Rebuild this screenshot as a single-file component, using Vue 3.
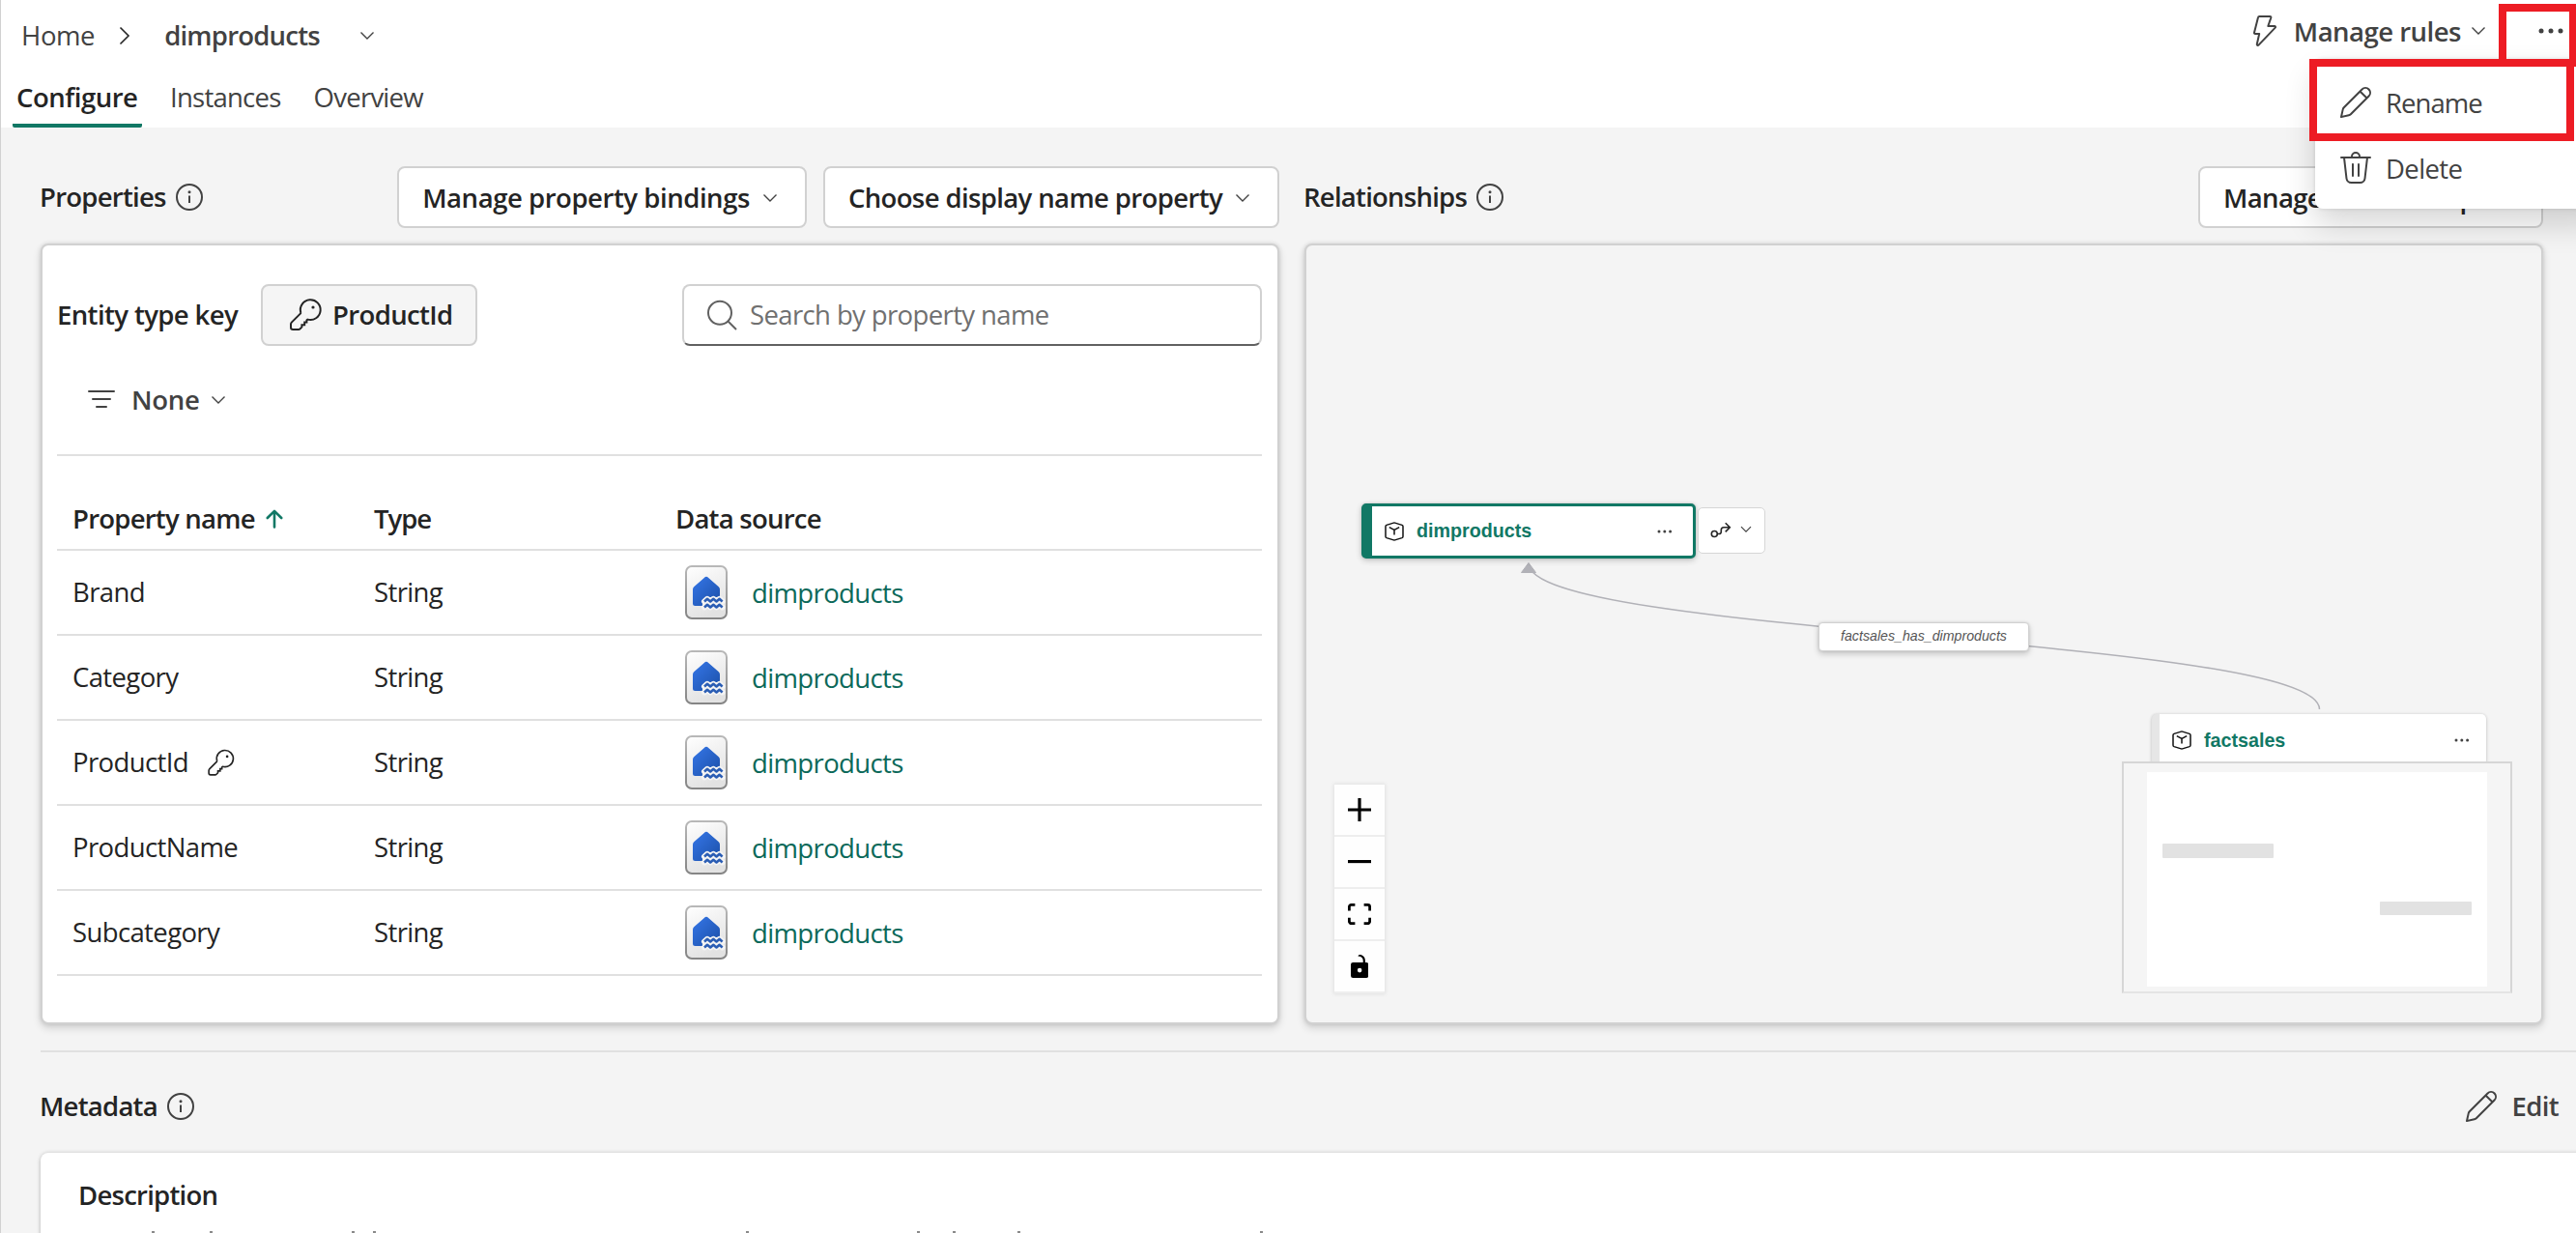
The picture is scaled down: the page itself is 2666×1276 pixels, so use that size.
<script setup>
import { ref } from 'vue';

const tabs = ['Configure', 'Instances', 'Overview'];
const activeTab = ref('Configure');

const properties = ref([
  { name: 'Brand', type: 'String', source: 'dimproducts', isKey: false },
  { name: 'Category', type: 'String', source: 'dimproducts', isKey: false },
  { name: 'ProductId', type: 'String', source: 'dimproducts', isKey: true },
  { name: 'ProductName', type: 'String', source: 'dimproducts', isKey: false },
  { name: 'Subcategory', type: 'String', source: 'dimproducts', isKey: false }
]);

const search = ref('');

const icons = {
  edit: 'M17.18 2.93a2.97 2.97 0 0 0-4.26-.06l-9.37 9.38c-.33.33-.56.74-.66 1.19l-.88 3.95a.5.5 0 0 0 .6.6l3.93-.87c.46-.1.9-.34 1.23-.68l9.36-9.36a2.97 2.97 0 0 0 .05-4.15Zm-3.55.65a1.97 1.97 0 1 1 2.8 2.8l-.68.66-2.8-2.79.68-.67Zm-1.38 1.38 2.8 2.8-7.99 7.97c-.2.2-.46.35-.74.41l-3.16.7.7-3.18c.07-.27.2-.51.4-.7l8-8Z',
  trash: 'M8.5 4h3a1.5 1.5 0 0 0-3 0Zm-1 0a2.5 2.5 0 0 1 5 0h5a.5.5 0 0 1 0 1h-1.05l-1.2 10.34A3 3 0 0 1 12.27 18H7.73a3 3 0 0 1-2.98-2.66L3.55 5H2.5a.5.5 0 0 1 0-1h5ZM5.74 15.23A2 2 0 0 0 7.73 17h4.54a2 2 0 0 0 1.99-1.77L15.44 5H4.56l1.18 10.23ZM8.5 7.5c.28 0 .5.22.5.5v6a.5.5 0 0 1-1 0V8c0-.28.22-.5.5-.5ZM12 8a.5.5 0 0 0-1 0v6a.5.5 0 0 0 1 0V8Z',
  key: 'M11.2 12.3l-.5.4v1H9.6v1.4H8.2v1.1l-.9.9c-.2.2-.5.4-.8.4H3.6c-.6 0-1.1-.5-1.1-1.1v-1.6c0-.4.2-.8.5-1.1l4.4-4.4c.2-.2.3-.4.2-.7A5.2 5.2 0 1 1 11.2 12.3Z'
};

const controls = [
  { id: 'zoom-in', box: '0 0 32 32', width: 24, d: 'M32 18.133H18.133V32h-4.266V18.133H0v-4.266h13.867V0h4.266v13.867H32z' },
  { id: 'zoom-out', box: '0 0 32 5', width: 24, d: 'M0 0h32v4.2H0z' },
  { id: 'fit', box: '0 0 32 30', width: 24, d: 'M3.692 4.63c0-.53.4-.938.939-.938h5.215V0H4.708C2.13 0 0 2.054 0 4.63v5.216h3.692V4.631zM27.354 0h-5.2v3.692h5.17c.53 0 .984.4.984.939v5.215H32V4.631A4.624 4.624 0 0027.354 0zm.954 24.83c0 .532-.4.94-.939.94h-5.215v3.768h5.215c2.577 0 4.631-2.13 4.631-4.707v-5.139h-3.692v5.139zm-23.677.94c-.531 0-.939-.4-.939-.94v-5.138H0v5.139c0 2.577 2.13 4.707 4.708 4.707h5.138V25.77H4.631z' },
  { id: 'lock', box: '0 0 25 32', width: 18.75, d: 'M21.333 10.667H19.81V7.619C19.81 3.429 16.38 0 12.19 0c-4.114 1.828-1.37 2.133.305 2.438 1.676.305 4.42 2.59 4.42 5.181v3.048H3.047A3.056 3.056 0 000 13.714v15.238A3.056 3.056 0 003.048 32h18.285a3.056 3.056 0 003.048-3.048V13.714a3.056 3.056 0 00-3.048-3.047zM12.19 24.533a3.056 3.056 0 01-3.047-3.047 3.056 3.056 0 013.047-3.048 3.056 3.056 0 013.048 3.048 3.056 3.056 0 01-3.048 3.047z' }
];

const nodes = [
  { name: 'dimproducts', selected: true, x: 57, y: 267 },
  { name: 'factsales', selected: false, x: 875, y: 485 }
];

// Tops of the first description line, the rest is below the fold
const descriptionMarks = [74, 134, 281, 303, 689, 866, 903, 970, 1221];
</script>

<template>
  <div class="page">
    <header class="header">
      <div class="title-row">
        <nav class="breadcrumb">
          <span class="crumb">Home</span>
          <svg class="crumb-sep" width="12" height="20" viewBox="0 0 12 20"><path d="M1.5 1.5 10 10l-8.5 8.5" /></svg>
          <span class="crumb current">dimproducts</span>
          <svg class="chevron crumb-chevron" width="16" height="10" viewBox="0 0 16 10"><path d="M1.5 1.5 8 8l6.5-6.5" /></svg>
        </nav>
        <div class="toolbar">
          <svg class="flash" width="24" height="32" viewBox="0 0 24 32">
            <path d="M6.3 1h11c.8 0 1.2.6 1 1.3L15.3 11H22c.9 0 1.3 1 .7 1.6L5.5 30.6c-.7.7-1.9.1-1.7-.9L6.200 19H2c-.7 0-1.200-.7-1-1.300L5 2c.1-.6.7-1 1.3-1Z" />
          </svg>
          <span class="toolbar-label">Manage rules</span>
          <svg class="chevron" width="16" height="10" viewBox="0 0 16 10"><path d="M1.5 1.5 8 8l6.5-6.5" /></svg>
          <svg class="more" width="26" height="6" viewBox="0 0 26 6">
            <circle cx="3" cy="3" r="2.5" /><circle cx="13" cy="3" r="2.5" /><circle cx="23" cy="3" r="2.5" />
          </svg>
        </div>
      </div>
      <div class="tabs">
        <button
          v-for="tab in tabs"
          :key="tab"
          class="tab"
          :class="{ active: tab === activeTab }"
          @click="activeTab = tab"
        >{{ tab }}</button>
      </div>
    </header>

    <main class="content">
      <div class="columns">
        <section class="column">
          <div class="section-head">
            <h2 class="section-title">Properties</h2>
            <svg class="info" width="28" height="28" viewBox="0 0 28 28">
              <circle cx="14" cy="14" r="13" /><path d="M14 12.5V20" /><circle class="dot" cx="14" cy="8.8" r="1.5" />
            </svg>
            <div class="section-actions">
              <button class="btn wide">
                Manage property bindings
                <svg class="chevron" width="16" height="10" viewBox="0 0 16 10"><path d="M1.5 1.5 8 8l6.5-6.5" /></svg>
              </button>
              <button class="btn">
                Choose display name property
                <svg class="chevron" width="16" height="10" viewBox="0 0 16 10"><path d="M1.5 1.5 8 8l6.5-6.5" /></svg>
              </button>
            </div>
          </div>

          <div class="panel properties-panel">
            <div class="key-row">
              <span class="key-label">Entity type key</span>
              <button class="btn key-btn">
                <svg class="key-icon" width="40" height="40" viewBox="0 0 20 20"><path :d="icons.key" /><circle cx="14" cy="6" r=".8" /></svg>
                ProductId
              </button>
              <label class="search">
                <svg width="32" height="32" viewBox="0 0 32 32"><circle cx="14" cy="13.8" r="12" /><path d="M22.5 22.5 31 31" /></svg>
                <input v-model="search" type="text" placeholder="Search by property name" />
              </label>
            </div>

            <div class="filter-row">
              <svg width="28" height="20" viewBox="0 0 28 20"><path d="M1 1h26M5 9h18M9 17h10" /></svg>
              <span class="filter-label">None</span>
              <svg class="chevron" width="16" height="10" viewBox="0 0 16 10"><path d="M1.5 1.5 8 8l6.5-6.5" /></svg>
            </div>

            <div class="table">
              <div class="row head">
                <div class="cell">
                  Property name
                  <svg class="sort" width="18" height="20" viewBox="0 0 18 20"><path d="M9 18.5V2M1.8 9 9 1.8 16.2 9" /></svg>
                </div>
                <div class="cell tight">Type</div>
                <div class="cell">Data source</div>
              </div>
              <div v-for="item in properties" :key="item.name" class="row">
                <div class="cell">
                  {{ item.name }}
                  <svg v-if="item.isKey" class="key-icon row-key" width="33" height="33" viewBox="0 0 20 20"><path :d="icons.key" /><circle cx="14" cy="6" r=".8" /></svg>
                </div>
                <div class="cell">{{ item.type }}</div>
                <div class="cell source">
                  <svg width="44" height="56" viewBox="0 0 44 56">
                    <defs>
                      <linearGradient id="tile-fill" x1="0" y1="0" x2=".4" y2="1">
                        <stop offset="0" stop-color="#fff" /><stop offset="1" stop-color="#e2e2e2" />
                      </linearGradient>
                      <linearGradient id="tile-edge" x1="0" y1="0" x2="0" y2="1">
                        <stop offset="0" stop-color="#b8b8b8" /><stop offset="1" stop-color="#858585" />
                      </linearGradient>
                      <linearGradient id="house-fill" x1="0" y1="0" x2="1" y2="1">
                        <stop offset="0" stop-color="#3576e8" /><stop offset="1" stop-color="#1c50a8" />
                      </linearGradient>
                    </defs>
                    <rect x="1" y="1" width="42" height="54" rx="6" fill="url(#tile-fill)" stroke="url(#tile-edge)" stroke-width="2" />
                    <path d="M19.8 12.9a3.2 3.2 0 0 1 4.4 0L34.8 22.3a3.6 3.6 0 0 1 1.2 2.7V39H18v3h-7.5A2.5 2.5 0 0 1 8 39.5V25c0-1 .4-2 1.2-2.7Z" fill="url(#house-fill)" />
                    <path class="halo" d="M20 37.4 23 34.800l3.200 2.600 3.100-2.600 3.200 2.600 3.100-2.600 3 2.600M20 43.400l3-2.600 3.200 2.600 3.100-2.600 3.200 2.600 3.100-2.600 3 2.600" />
                    <path class="wave" d="M20 37.4 23 34.800l3.200 2.600 3.100-2.600 3.200 2.600 3.100-2.600 3 2.600M20 43.400l3-2.600 3.200 2.600 3.100-2.600 3.200 2.600 3.100-2.600 3 2.600" />
                  </svg>
                  <a class="link">{{ item.source }}</a>
                </div>
              </div>
            </div>
          </div>
        </section>

        <section class="column">
          <div class="section-head">
            <h2 class="section-title">Relationships</h2>
            <svg class="info" width="28" height="28" viewBox="0 0 28 28">
              <circle cx="14" cy="14" r="13" /><path d="M14 12.5V20" /><circle class="dot" cx="14" cy="8.8" r="1.5" />
            </svg>
            <div class="section-actions">
              <button class="btn relations-btn">
                Manage relationships
                <svg class="chevron" width="16" height="10" viewBox="0 0 16 10"><path d="M1.5 1.5 8 8l6.5-6.5" /></svg>
              </button>
            </div>
          </div>

          <div class="panel canvas">
            <svg class="edges" width="1278" height="804" viewBox="0 0 1278 804">
              <path class="edge" d="M230 329C230 404.5 1048.5 404.5 1048.5 480" />
              <path class="edge-arrow" d="M230 328.5 222.5 338.5h15Z" />
            </svg>

            <div
              v-for="node in nodes"
              :key="node.name"
              class="node"
              :class="{ selected: node.selected }"
              :style="{ left: node.x + 'px', top: node.y + 'px' }"
            >
              <svg class="cube" width="20" height="20" viewBox="0 0 20 20">
                <path d="M9.3 1.1q.7-.2 1.4 0L18 3.4q1 .4 1 1.400v10.400q0 1-1 1.400l-7.300 2.300q-.7.2-1.400 0L2 16.600q-1-.4-1-1.400V4.800q0-1 1-1.400ZM4.800 5.600 10 8.300l5.200-2.700M10 8.300v5.200" />
              </svg>
              <span class="node-name">{{ node.name }}</span>
              <svg class="node-more" width="16" height="4" viewBox="0 0 16 4">
                <circle cx="2" cy="2" r="1.5" /><circle cx="7.8" cy="2" r="1.5" /><circle cx="13.6" cy="2" r="1.5" />
              </svg>
            </div>

            <div class="node-tools">
              <svg width="22" height="17" viewBox="0 0 22 17"><circle cx="4.3" cy="12.5" r="3" /><path d="M7.3 12.5H9q2.3 0 2.3-2.3V8.500q0-2.700 2.700-2.700h6M15.700 1.200l4.600 4.600-4.600 4.600" /></svg>
              <svg class="chevron" width="12" height="8" viewBox="0 0 12 8"><path d="M1 1.2 6 6.2l5-5" /></svg>
            </div>

            <div class="edge-label">factsales_has_dimproducts</div>

            <div class="minimap">
              <svg width="400" height="236" viewBox="0 0 400 236">
                <rect x="24" y="9" width="352" height="222" fill="#fff" />
                <rect x="40" y="83" width="115" height="15" rx="1" fill="#e2e2e2" />
                <rect x="265" y="143" width="95" height="14" rx="1" fill="#e2e2e2" />
              </svg>
            </div>

            <div class="controls">
              <button v-for="control in controls" :key="control.id" class="control">
                <svg :width="control.width" :viewBox="control.box"><path :d="control.d" /></svg>
              </button>
            </div>
          </div>
        </section>
      </div>

      <div class="metadata-head">
        <h2 class="section-title">Metadata</h2>
        <svg class="info" width="28" height="28" viewBox="0 0 28 28">
          <circle cx="14" cy="14" r="13" /><path d="M14 12.5V20" /><circle class="dot" cx="14" cy="8.8" r="1.5" />
        </svg>
        <button class="edit-btn">
          <svg width="40" height="40" viewBox="0 0 20 20"><path :d="icons.edit" /></svg>
          Edit
        </button>
      </div>
      <div class="card">
        <h3 class="section-title">Description</h3>
        <svg class="description" width="1300" height="4" viewBox="0 0 1300 4">
          <rect v-for="x in descriptionMarks" :key="x" :x="x" y="0" width="3" height="4" />
        </svg>
      </div>
    </main>

    <div class="menu">
      <div class="menu-item rename">
        <svg width="40" height="40" viewBox="0 0 20 20"><path :d="icons.edit" /></svg>
        <span>Rename</span>
      </div>
      <div class="menu-item">
        <svg width="40" height="40" viewBox="0 0 20 20"><path :d="icons.trash" /></svg>
        <span>Delete</span>
      </div>
    </div>
    <div class="highlight highlight-more"></div>
    <div class="highlight highlight-rename"></div>
  </div>
</template>

<style>
body {
  margin: 0;
  overflow: hidden;
}
</style>

<style scoped>
.page {
  position: relative;
  box-sizing: border-box;
  width: 2666px;
  height: 1276px;
  overflow: hidden;
  border-left: 1px solid #d1d1d1;
  background: #f4f4f4;
  color: #242424;
  font-family: "Segoe UI", "Open Sans", sans-serif;
  font-size: 27.5px;
  line-height: 40px;
  letter-spacing: -0.62px;
}
.page * {
  box-sizing: border-box;
}
button {
  font: inherit;
  letter-spacing: inherit;
  color: inherit;
  margin: 0;
}
svg {
  display: block;
  flex: none;
}
.chevron {
  fill: none;
  stroke: #424242;
  stroke-width: 1.4;
}

/* Header */
.header {
  height: 132px;
  background: #fff;
  color: #424242;
}
.title-row {
  display: flex;
  justify-content: space-between;
  align-items: flex-start;
  height: 73px;
}
.breadcrumb {
  display: flex;
  align-items: center;
  height: 73px;
  padding-left: 21px;
}
.crumb {
  letter-spacing: -0.4px;
}
.crumb-sep {
  margin: 0 35px 0 25px;
  fill: none;
  stroke: #242424;
  stroke-width: 1.6;
}
.current {
  font-weight: 600;
  letter-spacing: -0.78px;
}
.crumb-chevron {
  margin-left: 41px;
}
.toolbar {
  display: flex;
  align-items: center;
  height: 64px;
  padding-right: 13px;
}
.flash {
  fill: none;
  stroke: #424242;
  stroke-width: 2;
  stroke-linejoin: round;
}
.toolbar-label {
  margin: 0 10px 0 18px;
  padding-top: 2px;
  font-weight: 600;
  letter-spacing: -0.5px;
}
.more {
  margin-left: 54px;
  fill: #424242;
}
.tabs {
  display: flex;
  gap: 24px;
  height: 59px;
  padding-left: 12px;
}
.tab {
  padding: 0 5px 4px;
  border: none;
  background: none;
  letter-spacing: -0.75px;
}
.tab.active {
  width: 134px;
  padding: 0 0 0 4px;
  border-bottom: 4px solid #117865;
  border-radius: 2px;
  color: #242424;
  font-weight: 600;
  letter-spacing: -0.48px;
  text-align: left;
}

/* Sections */
.content {
  padding: 40px 0 0 41px;
}
.columns {
  display: grid;
  grid-template-columns: 1282px 1282px;
  gap: 26px;
}
.column {
  display: flex;
  flex-direction: column;
  gap: 16px;
}
.section-head {
  display: flex;
  align-items: center;
  height: 64px;
}
.section-title {
  margin: 0 0 0 -1px;
  font-size: inherit;
  font-weight: 600;
  letter-spacing: -0.75px;
}
.info {
  margin-left: 10px;
  fill: none;
  stroke: #424242;
  stroke-width: 2;
}
.info .dot {
  fill: #424242;
  stroke: none;
}
.section-actions {
  display: flex;
  gap: 17px;
  margin-left: auto;
}
.btn {
  display: flex;
  align-items: center;
  gap: 13px;
  height: 64px;
  padding: 1px 28px 0 24px;
  border: 2px solid #d1d1d1;
  border-radius: 8px;
  background: #fff;
  font-weight: 600;
  white-space: nowrap;
}
.wide {
  letter-spacing: -0.45px;
}
.relations-btn {
  width: 357px;
}
.panel {
  height: 808px;
  border: 2px solid #d1d1d1;
  border-radius: 8px;
  box-shadow: 0 0 4px rgba(0, 0, 0, 0.12), 0 4px 8px rgba(0, 0, 0, 0.14);
}

/* Properties */
.properties-panel {
  padding: 40px 16px 0 15px;
  background: #fff;
}
.key-row {
  display: flex;
  align-items: center;
}
.key-label {
  width: 211px;
  font-weight: 600;
  letter-spacing: -0.6px;
}
.key-btn {
  gap: 8px;
  width: 224px;
  padding: 0 0 0 24px;
  background: #f5f5f5;
}
.key-icon {
  fill: none;
  stroke: #242424;
  stroke-width: 1;
}
.key-icon circle {
  fill: #242424;
  stroke: none;
}
.search {
  display: flex;
  align-items: center;
  gap: 13px;
  width: 600px;
  height: 64px;
  margin-left: auto;
  padding: 0 23px;
  border: 2px solid #d1d1d1;
  border-bottom-color: #616161;
  border-radius: 8px;
}
.search svg {
  fill: none;
  stroke: #616161;
  stroke-width: 2;
}
.search input {
  flex: 1;
  min-width: 0;
  padding: 0;
  border: none;
  outline: none;
  background: none;
  color: #242424;
  font: inherit;
  letter-spacing: inherit;
}
.search input::placeholder {
  color: #707070;
  opacity: 1;
}
.filter-row {
  display: flex;
  align-items: center;
  height: 114px;
  padding-left: 32px;
  border-bottom: 2px solid #e0e0e0;
  color: #424242;
  font-weight: 600;
}
.filter-row svg:first-child {
  fill: none;
  stroke: #424242;
  stroke-width: 2;
  stroke-linecap: round;
}
.filter-label {
  margin: 0 12px 0 17px;
  letter-spacing: -0.3px;
}
.row {
  display: grid;
  grid-template-columns: 312px 312px 1fr;
  height: 88px;
  border-bottom: 2px solid #e0e0e0;
}
.row.head {
  height: 98px;
  padding-top: 34px;
  font-weight: 600;
  letter-spacing: -0.76px;
}
.cell {
  display: flex;
  align-items: center;
  padding-left: 16px;
}
.tight {
  letter-spacing: -1px;
}
.sort {
  margin-left: 11px;
  fill: none;
  stroke: #117865;
  stroke-width: 2.6;
  stroke-linecap: round;
  stroke-linejoin: round;
}
.row-key {
  margin-left: 17px;
}
.source {
  gap: 25px;
  padding-left: 26px;
}
.halo,
.wave {
  fill: none;
  stroke: #f4f4f4;
  stroke-width: 6;
  stroke-linecap: round;
  stroke-linejoin: round;
}
.wave {
  stroke: #2a5db4;
  stroke-width: 2.6;
  stroke-linecap: butt;
}
.link {
  padding-top: 2px;
  color: #0c695a;
}

/* Relationship canvas */
.canvas {
  position: relative;
  background: #f4f4f4;
}
.edges {
  position: absolute;
  left: 0;
  top: 0;
}
.edge {
  fill: none;
  stroke: #b1b1b7;
  stroke-width: 1.5;
}
.edge-arrow {
  fill: #b1b1b7;
  stroke: #b1b1b7;
  stroke-linejoin: round;
}
.node {
  position: absolute;
  display: flex;
  align-items: center;
  width: 346px;
  height: 53px;
  padding: 0 17px 0 13px;
  border-left: 8px solid #e6e6e6;
  border-radius: 5px;
  background: #fff;
  box-shadow: 0 0 3px rgba(0, 0, 0, 0.14), 0 2px 4px rgba(0, 0, 0, 0.12);
}
.node.selected {
  height: 57px;
  padding: 0 21px 0 13px;
  border: 3px solid #117865;
  border-left-width: 11px;
  box-shadow: 0 0 3px rgba(0, 0, 0, 0.14), 0 2px 6px rgba(0, 0, 0, 0.2);
}
.cube {
  fill: none;
  stroke: #111;
  stroke-width: 1.5;
}
.node-name {
  margin-left: 13px;
  color: #117865;
  font-family: "Liberation Sans", Arial, sans-serif;
  font-size: 19.7px;
  font-weight: 700;
  line-height: 24px;
  letter-spacing: 0;
}
.selected .node-name {
  padding-bottom: 1px;
}
.node-more {
  margin-left: auto;
  fill: #424242;
}
.node-tools {
  position: absolute;
  left: 405px;
  top: 271px;
  display: flex;
  align-items: center;
  gap: 9px;
  width: 70px;
  height: 48px;
  padding: 0 0 2px 12px;
  border: 1.5px solid #d6d6d6;
  border-radius: 5px;
  background: #fff;
}
.node-tools svg {
  fill: none;
  stroke: #242424;
  stroke-width: 1.6;
}
.node-tools .chevron {
  stroke: #424242;
  stroke-width: 1.2;
}
.edge-label {
  position: absolute;
  left: 530px;
  top: 390px;
  width: 218px;
  height: 30px;
  border: 1.5px solid #d1d1d1;
  border-radius: 4px;
  background: #fff;
  box-shadow: 0 0 3px rgba(0, 0, 0, 0.12), 0 3px 6px rgba(0, 0, 0, 0.18);
  color: #555;
  font-family: "Liberation Sans", Arial, sans-serif;
  font-size: 14.2px;
  font-style: italic;
  line-height: 26px;
  letter-spacing: 0;
  text-align: center;
}
.minimap {
  position: absolute;
  left: 844px;
  top: 534px;
  border: 2px solid #d6d6d6;
  border-bottom-color: #e4e4e4;
  background: #f5f5f5;
}
.controls {
  position: absolute;
  left: 29px;
  top: 558px;
  width: 52px;
  box-shadow: 0 0 4px 1px rgba(0, 0, 0, 0.08);
}
.control {
  display: flex;
  align-items: center;
  justify-content: center;
  width: 52px;
  height: 54px;
  padding: 0;
  border: none;
  border-bottom: 2px solid #eee;
  background: #fefefe;
}

/* Metadata */
.metadata-head {
  display: flex;
  align-items: center;
  height: 106px;
  margin-top: 27px;
  padding: 8px 18px 0 0;
  border-top: 2px solid #e0e0e0;
}
.edit-btn {
  display: flex;
  align-items: center;
  gap: 11px;
  margin-left: auto;
  padding: 0;
  border: none;
  background: none;
  color: #424242;
  font-weight: 600;
}
.edit-btn svg,
.menu-item svg {
  fill: #424242;
}
.card {
  height: 200px;
  margin-right: -10px;
  padding: 24px 40px;
  border-radius: 8px;
  background: #fff;
  box-shadow: 0 0 4px rgba(0, 0, 0, 0.16), 0 2px 4px rgba(0, 0, 0, 0.14);
}
.description {
  margin: 17px 0 0 1px;
  fill: #8a8a8a;
}

/* Overflow menu */
.menu {
  position: absolute;
  left: 2395px;
  top: 61px;
  width: 300px;
  height: 155px;
  padding: 11px 0 0 22px;
  border-radius: 8px;
  background: #fff;
  box-shadow: 0 0 4px rgba(0, 0, 0, 0.12), 0 16px 32px rgba(0, 0, 0, 0.16);
  color: #424242;
}
.menu-item {
  display: flex;
  align-items: center;
  gap: 11px;
  height: 68px;
}
.menu-item span {
  padding-top: 2px;
}
.rename {
  letter-spacing: -0.95px;
}
.highlight {
  position: absolute;
  border: 8px solid #ed1c24;
}
.highlight-more {
  left: 2585px;
  top: 4px;
  width: 81px;
  height: 65px;
}
.highlight-rename {
  left: 2389px;
  top: 61px;
  width: 274px;
  height: 85px;
}
</style>
